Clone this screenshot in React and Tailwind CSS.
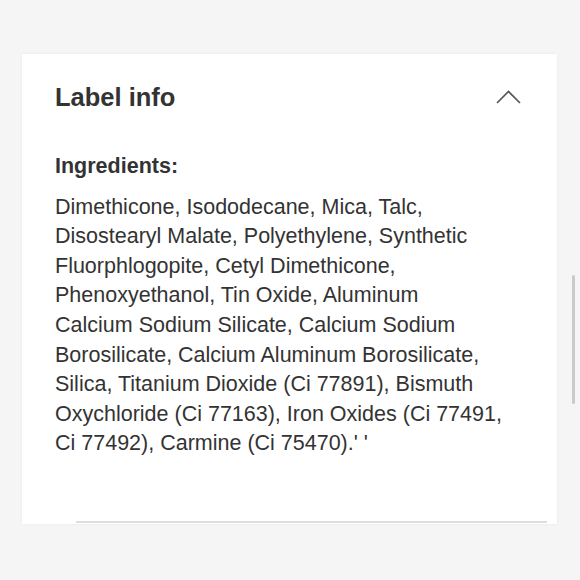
import React from "react";

const lines = [
  "Dimethicone, Isododecane, Mica, Talc,",
  "Disostearyl Malate, Polyethylene, Synthetic",
  "Fluorphlogopite, Cetyl Dimethicone,",
  "Phenoxyethanol, Tin Oxide, Aluminum",
  "Calcium Sodium Silicate, Calcium Sodium",
  "Borosilicate, Calcium Aluminum Borosilicate,",
  "Silica, Titanium Dioxide (Ci 77891), Bismuth",
  "Oxychloride (Ci 77163), Iron Oxides (Ci 77491,",
  "Ci 77492), Carmine (Ci 75470).' '",
];

export default function App() {
  return (
    <div
      className="relative w-[580px] h-[580px] overflow-hidden bg-[#f5f5f5] pt-[54px] pl-[22px]"
      style={{ fontFamily: '"Liberation Sans", Arial, Helvetica, sans-serif' }}
    >
      <div className="relative w-[535px] h-[470px] bg-white shadow-[0_0_3px_rgba(0,0,0,0.05)] pl-[33px] pt-[31px]">
        <div className="flex items-center justify-between pr-[36px]">
          <h2 className="text-[25.5px] leading-[25px] font-bold text-[#333]">Label info</h2>
          <svg width="25" height="14" viewBox="0 0 25 14" className="mt-[-1px]">
            <path d="M1 13 L12.5 1.5 L24 13" fill="none" stroke="#555" strokeWidth="1.6" />
          </svg>
        </div>
        <div className="mt-[42px] text-[21.5px] leading-[29.6px] font-bold text-[#333]">Ingredients:</div>
        <div className="mt-[11px] text-[21.5px] leading-[29.6px] text-[#333]">
          {lines.map((l, i) => (
            <div key={i} className="whitespace-nowrap">{l}</div>
          ))}
        </div>
        <div className="absolute left-[54px] right-[10px] bottom-[1px] h-[2px] bg-[#dedede]" />
      </div>
      <div className="absolute left-[572px] top-[275px] w-[3px] h-[129px] rounded-full bg-[#cbcbcb]" />
    </div>
  );
}
